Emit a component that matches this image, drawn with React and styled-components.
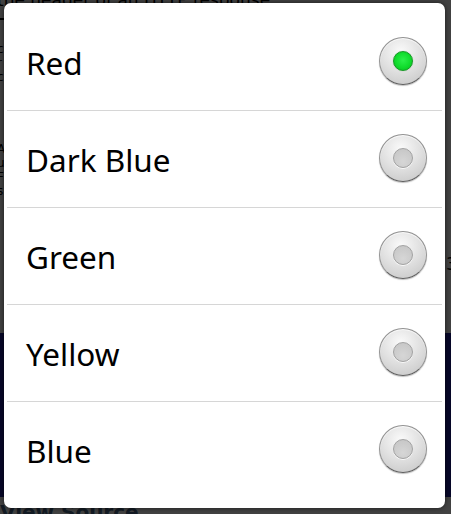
import React from "react";
import styled, { createGlobalStyle } from "styled-components";

const Global = createGlobalStyle`
  html, body { margin: 0; padding: 0; background: #fff; }
  body { font-family: "Noto Sans", "Open Sans", sans-serif; }
`;

const Screen = styled.div`
  position: relative;
  width: 451px;
  height: 514px;
  overflow: hidden;
  background: #fff;
`;

const Page = styled.div`
  display: flex;
  flex-direction: column;
  font-family: "DejaVu Sans", sans-serif;
  color: #000;
  margin-left: -3px;
`;

const TopLine = styled.div`
  margin-top: -10px;
  line-height: 20px;
  font-size: 17px;
  white-space: nowrap;
  padding-bottom: 8px;
  border-bottom: 2px solid #000;
  width: 12px;
`;

const Para = styled.div`
  margin-top: ${(p) => p.$mt}px;
  display: flex;
  flex-direction: column;
  font-size: 12px;
  line-height: 14px;
`;

const Navy = styled.div`
  margin-top: ${(p) => p.$mt}px;
  height: 164px;
  width: 100%;
  background: #1c1c99;
`;

const Link = styled.div`
  margin-top: 4px;
  font-weight: bold;
  font-size: 20px;
  line-height: 22px;
  color: #4a6a8a;
  white-space: nowrap;
  padding-left: 3px;
`;

const Side = styled.div`
  position: absolute;
  left: 446px;
  top: 254px;
  font-family: "DejaVu Sans", sans-serif;
  font-size: 17px;
  line-height: 20px;
  color: #000;
`;

const Dim = styled.div`
  position: absolute;
  inset: 0;
  background: rgba(0, 0, 0, 0.74);
`;

const Dialog = styled.div`
  position: absolute;
  left: 4px;
  top: 3px;
  width: 441px;
  height: 505px;
  box-sizing: border-box;
  background: #fff;
  border-radius: 7px;
  box-shadow: 0 0 5px rgba(0, 0, 0, 0.6);
  padding: 11px 3px 10px;
  display: flex;
  flex-direction: column;
`;

const Row = styled.div`
  height: 96px;
  display: flex;
  align-items: center;
  justify-content: space-between;
  padding: 0 15px 0 19px;
  border-top: ${(p) => (p.$first ? "none" : "1px solid #d6d6d6")};
`;

const Label = styled.span`
  font-family: "Noto Sans", "Open Sans", sans-serif;
  font-size: 31.5px;
  color: #000;
  margin-top: 1px;
`;

const Radio = styled.span`
  width: 48px;
  height: 48px;
  border-radius: 50%;
  box-sizing: border-box;
  margin-top: -2px;
  display: flex;
  align-items: center;
  justify-content: center;
  background: radial-gradient(circle at 45% 30%, #fafafa 0%, #e2e2e2 45%, #c2c2c2 100%);
  border: 1px solid #929292;
  border-bottom-color: #5e5e5e;
  box-shadow: inset 0 1px 1px rgba(255, 255, 255, 0.9), 0 1px 1px rgba(0, 0, 0, 0.25);
`;

const Dot = styled.span`
  width: 20px;
  height: 20px;
  border-radius: 50%;
  box-sizing: border-box;
  background: ${(p) =>
    p.$on
      ? "radial-gradient(circle at 50% 45%, #2cf04a 0%, #10dc2c 55%, #08b81e 100%)"
      : "radial-gradient(circle at 50% 70%, #d6d6d6 0%, #c4c4c4 100%)"};
  border: 1px solid ${(p) => (p.$on ? "#139a22" : "#a2a2a2")};
  box-shadow: ${(p) =>
    p.$on ? "0 0 1px rgba(0,80,0,0.4)" : "0 1px 0 rgba(255,255,255,0.8)"};
`;

const items = [
  { label: "Red", on: true },
  { label: "Dark Blue" },
  { label: "Green" },
  { label: "Yellow" },
  { label: "Blue" },
];

export default function App() {
  return (
    <Screen>
      <Global />
      <Page>
        <TopLine>the header of an HTTP response</TopLine>
        <Para $mt={22}>
          <span>c</span>
          <span>r</span>
          <span>c</span>
          <span>i</span>
        </Para>
        <Para $mt={44}>
          <span>A</span>
          <span>u</span>
          <span>F</span>
          <span>s</span>
        </Para>
        <Navy $mt={135} />
        <Link>View Source</Link>
      </Page>
      <Side>3</Side>
      <Dim />
      <Dialog>
        {items.map((it, i) => (
          <Row key={it.label} $first={i === 0}>
            <Label>{it.label}</Label>
            <Radio>
              <Dot $on={!!it.on} />
            </Radio>
          </Row>
        ))}
      </Dialog>
    </Screen>
  );
}
